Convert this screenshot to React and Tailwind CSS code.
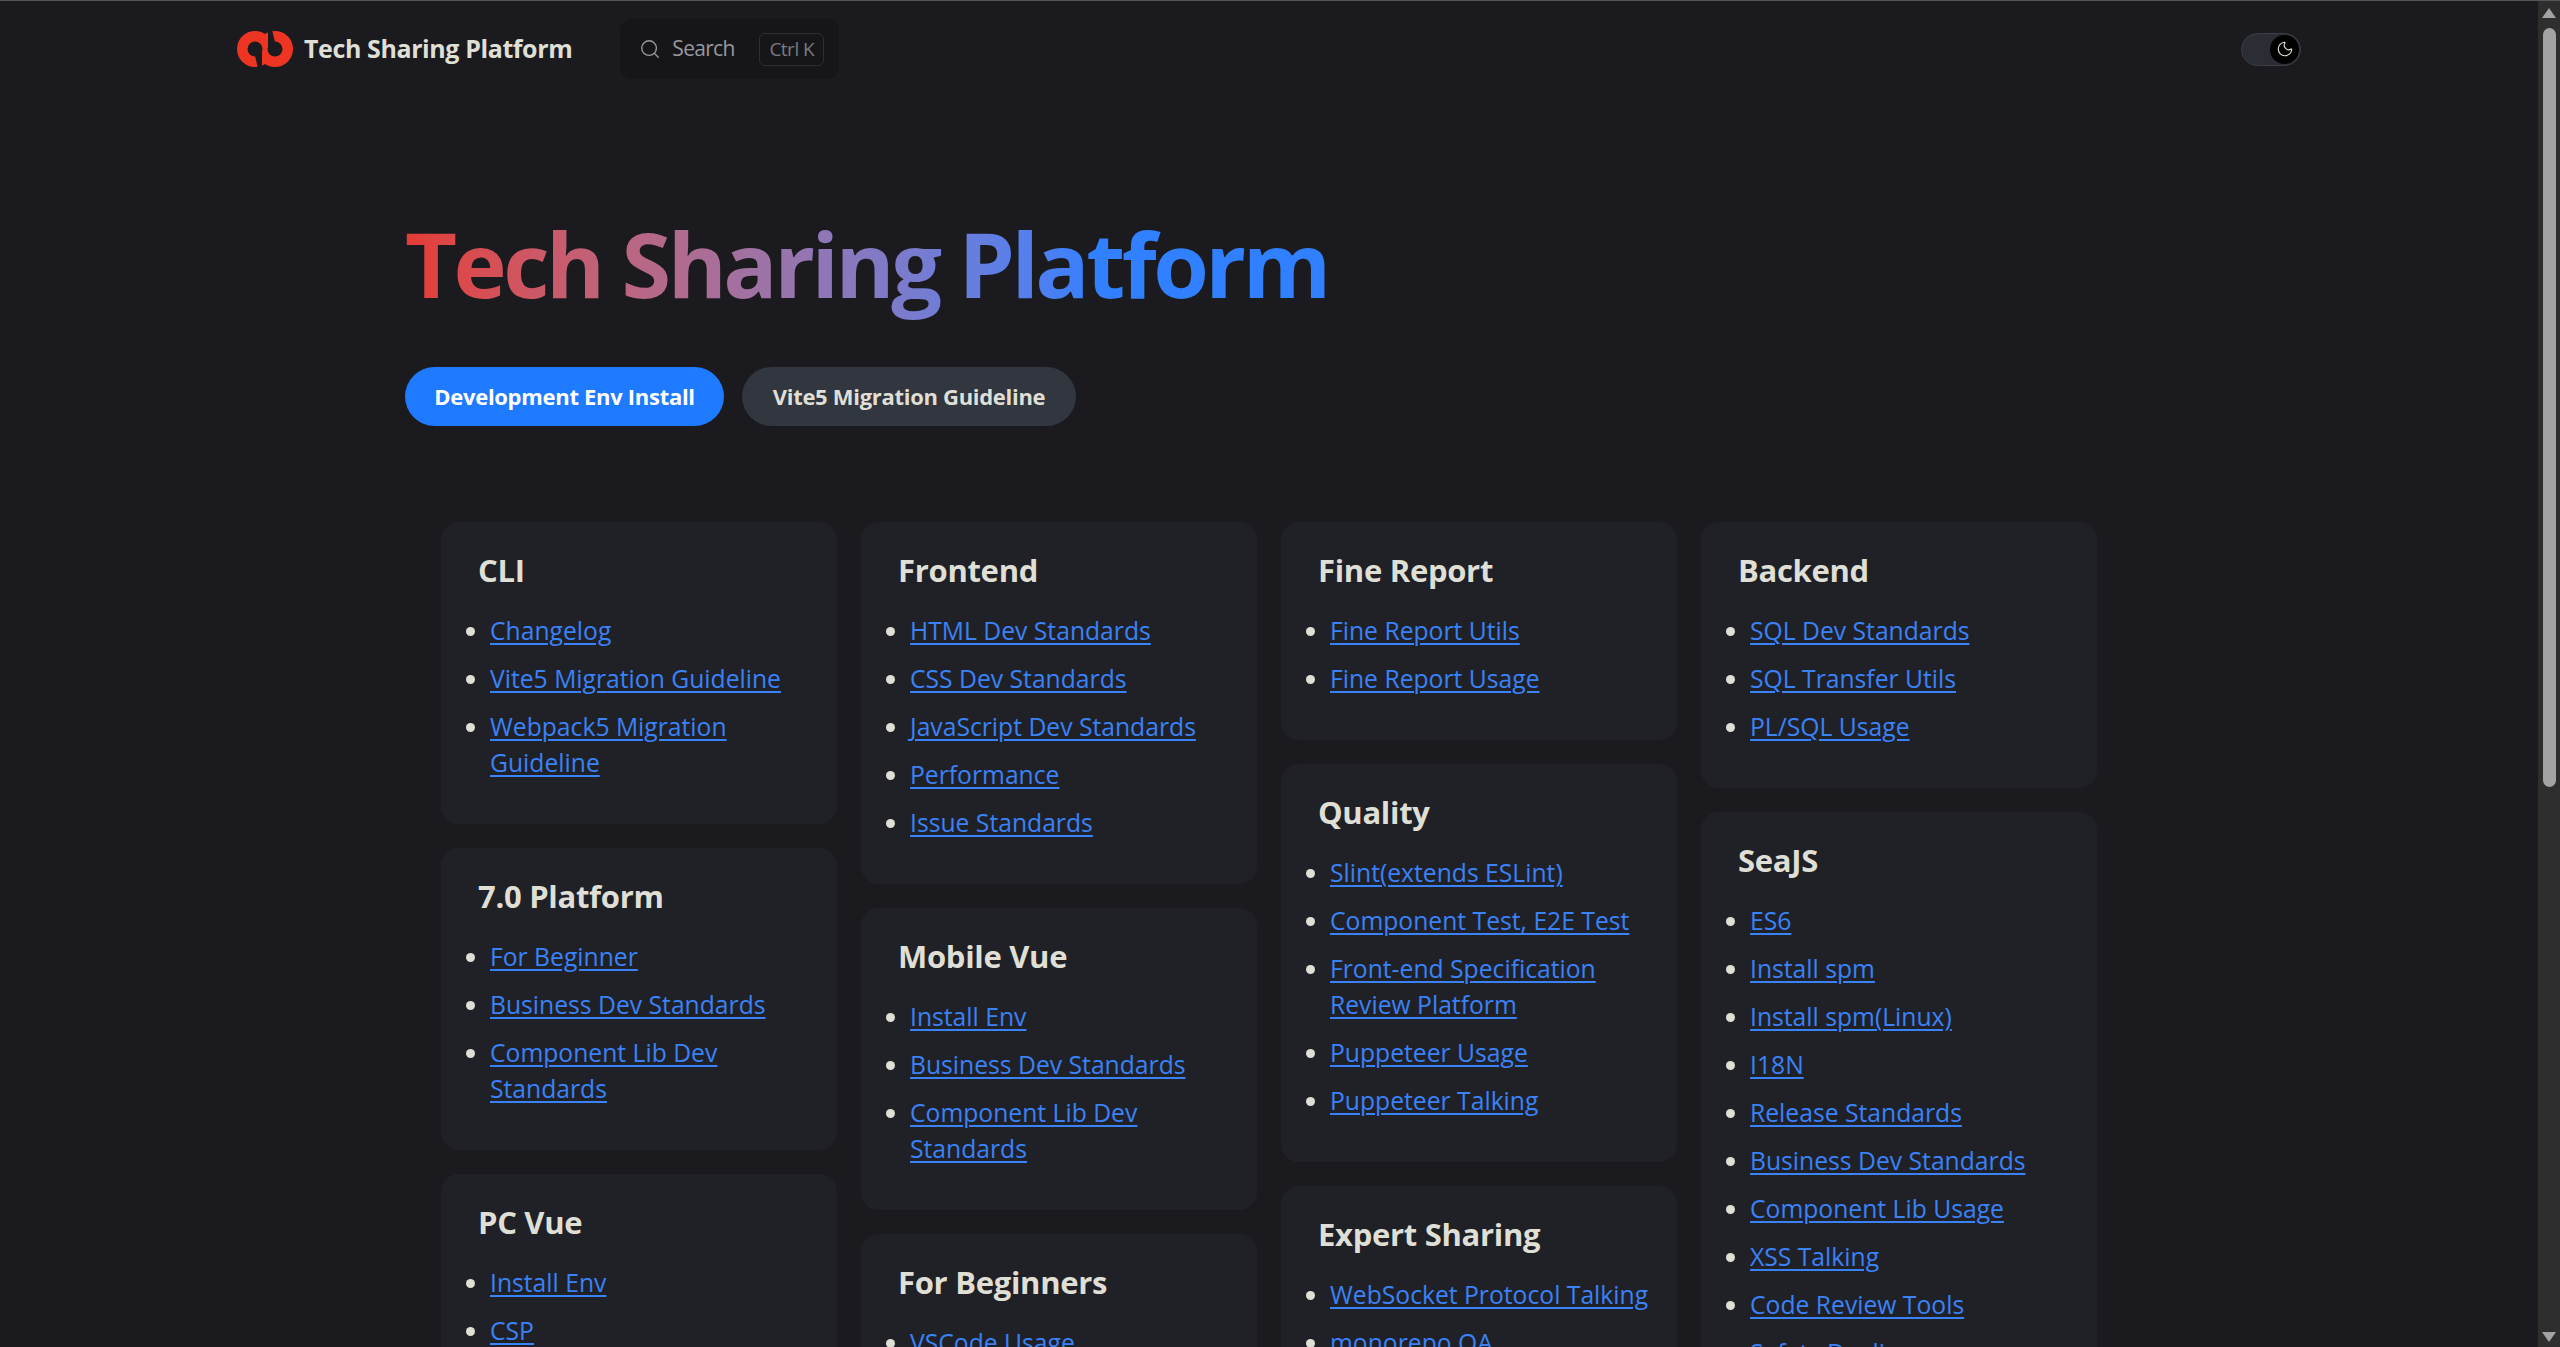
import { Search, Moon } from "lucide-react";

const columns = [
  [
    { title: "CLI", links: ["Changelog", "Vite5 Migration Guideline", "Webpack5 Migration Guideline"] },
    { title: "7.0 Platform", links: ["For Beginner", "Business Dev Standards", "Component Lib Dev Standards"] },
    { title: "PC Vue", links: ["Install Env", "CSP", "Business Dev Standards"] },
  ],
  [
    { title: "Frontend", links: ["HTML Dev Standards", "CSS Dev Standards", "JavaScript Dev Standards", "Performance", "Issue Standards"] },
    { title: "Mobile Vue", links: ["Install Env", "Business Dev Standards", "Component Lib Dev Standards"] },
    { title: "For Beginners", links: ["VSCode Usage", "Git Usage"] },
  ],
  [
    { title: "Fine Report", links: ["Fine Report Utils", "Fine Report Usage"] },
    { title: "Quality", links: ["Slint(extends ESLint)", "Component Test, E2E Test", "Front-end Specification Review Platform", "Puppeteer Usage", "Puppeteer Talking"] },
    { title: "Expert Sharing", links: ["WebSocket Protocol Talking", "monorepo QA"] },
  ],
  [
    { title: "Backend", links: ["SQL Dev Standards", "SQL Transfer Utils", "PL/SQL Usage"] },
    { title: "SeaJS", links: ["ES6", "Install spm", "Install spm(Linux)", "I18N", "Release Standards", "Business Dev Standards", "Component Lib Usage", "XSS Talking", "Code Review Tools", "Safety Dealing"] },
  ],
];

function Logo() {
  return (
    <svg width="56" height="36" viewBox="0 0 56 36">
      <circle cx="18" cy="18" r="18" fill="#ee3524" />
      <circle cx="38" cy="18" r="18" fill="#ee3524" />
      {/* holes and the slots that open them */}
      <circle cx="18" cy="18" r="7.5" fill="#1b1b1f" />
      <circle cx="38" cy="18" r="7.5" fill="#1b1b1f" />
      <path d="M18 25 L25 20 L25 37 H21 Z" fill="#1b1b1f" />
      <path d="M38 11 L31 16 L31 -1 H35 Z" fill="#1b1b1f" />
    </svg>
  );
}

function Card({ title, links }) {
  return (
    <section className="bg-[#202127] rounded-[18px] pt-[27px] pb-[43px] pl-[19px] pr-[19px]">
      <h3 className="pl-[18px] text-[31px] leading-[42px] font-bold tracking-[-0.3px] text-[#dfdfd6]">{title}</h3>
      <ul className="mt-[22px] pl-[30px] list-disc marker:text-[#dfdfd6] text-[24.7px] leading-[36px]">
        {links.map((l) => (
          <li key={l} className="mt-3 first:mt-0">
            <a href="#" className="text-[#3a82f8] underline decoration-2 underline-offset-[3px]">{l}</a>
          </li>
        ))}
      </ul>
    </section>
  );
}

export default function App() {
  return (
    <div className="h-screen overflow-hidden flex bg-[#1b1b1f] font-['Open_Sans',sans-serif] border-t border-[#555]">
      <div className="flex-1 min-w-0">
        <header className="flex items-center h-[60px] mt-[18px] pl-[237px] pr-[237px]">
          <Logo />
          <span className="ml-[11px] text-[25px] font-bold tracking-[-0.4px] text-[#dfdfd6]">Tech Sharing Platform</span>
          <button className="ml-[48px] flex items-center w-[219px] h-[60px] rounded-[12px] bg-[#161618] pl-[19px] pr-[15px]">
            <Search size={22} strokeWidth={1.5} className="text-[#98989f]" />
            <span className="ml-[11px] text-[21px] text-[#98989f] tracking-[-0.7px]">Search</span>
            <kbd className="ml-auto w-[65px] h-[33px] flex items-center justify-center rounded-[6px] border border-[#2e2e32] text-[19px] text-[#7a7a80] font-['Open_Sans',sans-serif] tracking-[-0.5px]">Ctrl K</kbd>
          </button>
          <div className="ml-auto w-[60px] h-[33px] rounded-full bg-[#2a2d33] border border-[#3c3f44] flex items-center justify-end pr-[1px]">
            <span className="w-[29px] h-[29px] rounded-full bg-black flex items-center justify-center">
              <Moon size={18} strokeWidth={1.5} className="text-[#dfdfd6]" />
            </span>
          </div>
        </header>

        <main className="pl-[405px]">
          <h1 className="mt-[130px] pb-[6px] text-[90px] leading-[108px] font-bold tracking-[-3.5px] w-fit bg-gradient-to-r from-[#e53a34] to-[#3080ff] to-[75%] bg-clip-text text-transparent">
            Tech Sharing Platform
          </h1>
          <div className="mt-[44px] flex gap-[18px]">
            <a className="h-[59px] w-[319px] flex items-center justify-center rounded-full bg-[#1e7aff] text-white text-[22px] font-bold tracking-[-0.3px]">Development Env Install</a>
            <a className="h-[59px] w-[334px] flex items-center justify-center rounded-full bg-[#32363f] text-[#dfdfd6] text-[22px] font-bold tracking-[-0.3px]">Vite5 Migration Guideline</a>
          </div>
        </main>

        <div className="mt-[96px] ml-[441px] flex gap-6 items-start">
          {columns.map((col, i) => (
            <div key={i} className="w-[396px] flex flex-col gap-6">
              {col.map((c) => (
                <Card key={c.title} {...c} />
              ))}
            </div>
          ))}
        </div>
      </div>

      {/* browser scrollbar */}
      <div className="w-[22px] shrink-0 bg-[#2e2e2e] flex flex-col items-center relative">
        <svg width="14" height="10" viewBox="0 0 14 10" className="mt-[7px]" fill="#a3a3a3"><path d="M7 0 L14 10 H0 Z" /></svg>
        <div className="mt-[10px] w-[13px] h-[759px] rounded-full bg-[#a3a3a3]" />
        <svg width="14" height="10" viewBox="0 0 14 10" className="absolute bottom-[5px]" fill="#a3a3a3"><path d="M7 10 L14 0 H0 Z" /></svg>
      </div>
    </div>
  );
}
